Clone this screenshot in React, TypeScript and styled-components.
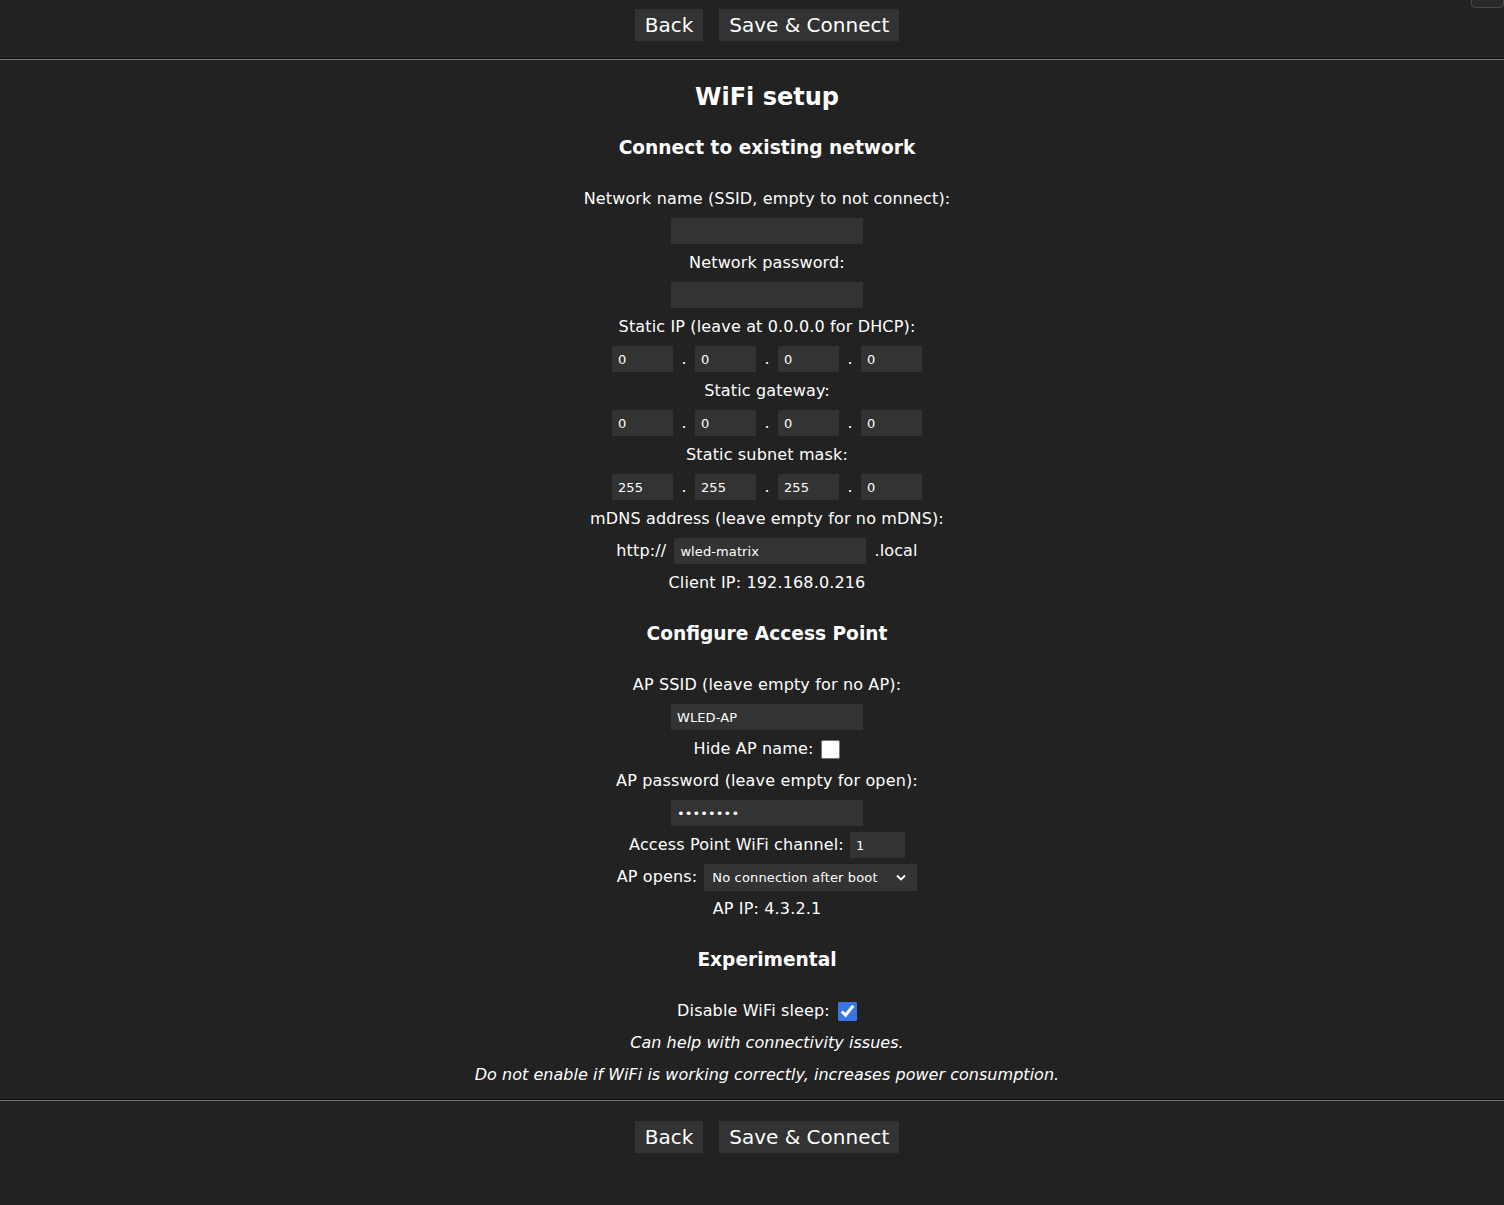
import { createGlobalStyle } from 'styled-components'
import styled from 'styled-components'

const GlobalStyle = createGlobalStyle`
  html, body {
    margin: 0;
    padding: 0;
    background: #222;
  }
  body {
    font-family: "DejaVu Sans", Verdana, sans-serif;
    font-size: 16px;
    color: #fff;
  }
`

const Page = styled.div`
  position: relative;
  min-height: 1205px;
  background: #222;
  overflow: hidden;
`

const HelpTab = styled.div`
  position: absolute;
  top: -28px;
  right: 0;
  width: 31px;
  height: 34px;
  background: #2a2a2a;
  border: 1px solid #4a4a4a;
  border-radius: 4px;
`

const ButtonRow = styled.div<{ $top: number }>`
  display: flex;
  justify-content: center;
  gap: 16px;
  padding-left: 30px;
  padding-top: ${(p) => p.$top}px;
  padding-bottom: 17px;
`

const Button = styled.button`
  height: 32px;
  padding: 0 10px;
  background: #333;
  color: #fff;
  border: 0;
  font-family: "DejaVu Sans", Verdana, sans-serif;
  font-size: 20px;
  line-height: 32px;
  cursor: pointer;
`

const Rule = styled.div`
  height: 1px;
  background: #0c0c0c;
  border-bottom: 1px solid #7a7a7a;
`

const Content = styled.div`
  padding-left: 30px;
  text-align: center;
  line-height: 32px;
  letter-spacing: 0.15px;
`

const Title = styled.h2`
  margin: 21px 0 19px;
  font-size: 24px;
  line-height: 32px;
  font-weight: bold;
  letter-spacing: 0;
`

const Section = styled.h3`
  margin: 19px 0;
  font-size: 18.6px;
  line-height: 32px;
  font-weight: bold;
  letter-spacing: 0;
`

const Line = styled.div`
  height: 32px;
  display: flex;
  justify-content: center;
  align-items: center;
  white-space: nowrap;
`

const Note = styled(Line)`
  font-style: italic;
  letter-spacing: 0.03px;
`

const Field = styled.input<{ $w: number }>`
  box-sizing: border-box;
  width: ${(p) => p.$w}px;
  height: 26px;
  margin: 0;
  padding: 0 6px;
  background: #333;
  color: #fff;
  border: 0;
  outline: none;
  font-family: "DejaVu Sans", Verdana, sans-serif;
  font-size: 13px;
  letter-spacing: 0.1px;
`

const Dot = styled.span`
  width: 22px;
  text-align: center;
`

const Gap = styled.span<{ $w: number }>`
  display: inline-block;
  width: ${(p) => p.$w}px;
`

const Check = styled.input`
  width: 19px;
  height: 19px;
  margin: 0 0 0 8px;
  accent-color: #3b74e6;
`

const SelectBox = styled.div`
  position: relative;
  display: inline-flex;
  margin-left: 7px;
`

const Select = styled.select`
  appearance: none;
  box-sizing: border-box;
  width: 213px;
  height: 27px;
  padding: 0 0 0 8px;
  background: #333;
  color: #fff;
  border: 0;
  outline: none;
  font-family: "DejaVu Sans", Verdana, sans-serif;
  font-size: 13px;
  letter-spacing: 0.15px;
`

const Chevron = styled.svg`
  position: absolute;
  right: 10px;
  top: 9px;
  pointer-events: none;
`

const IpRow = ({ values }: { values: string[] }) => (
  <Line>
    {values.map((v, i) => (
      <span key={i} style={{ display: 'contents' }}>
        {i > 0 && <Dot>.</Dot>}
        <Field $w={61} defaultValue={v} />
      </span>
    ))}
  </Line>
)

const Buttons = ({ top }: { top: number }) => (
  <ButtonRow $top={top}>
    <Button type="button">Back</Button>
    <Button type="submit">Save &amp; Connect</Button>
  </ButtonRow>
)

export default function App() {
  return (
    <Page>
      <GlobalStyle />
      <HelpTab />
      <Buttons top={9} />
      <Rule />
      <Content>
        <Title>WiFi setup</Title>
        <Section>Connect to existing network</Section>
        <Line>Network name (SSID, empty to not connect):</Line>
        <Line>
          <Field $w={192} />
        </Line>
        <Line>Network password:</Line>
        <Line>
          <Field $w={192} type="password" />
        </Line>
        <Line>Static IP (leave at 0.0.0.0 for DHCP):</Line>
        <IpRow values={['0', '0', '0', '0']} />
        <Line>Static gateway:</Line>
        <IpRow values={['0', '0', '0', '0']} />
        <Line>Static subnet mask:</Line>
        <IpRow values={['255', '255', '255', '0']} />
        <Line>mDNS address (leave empty for no mDNS):</Line>
        <Line>
          http://
          <Gap $w={8} />
          <Field $w={192} defaultValue="wled-matrix" />
          <Gap $w={8} />
          .local
        </Line>
        <Line>Client IP: 192.168.0.216</Line>

        <Section>Configure Access Point</Section>
        <Line>AP SSID (leave empty for no AP):</Line>
        <Line>
          <Field $w={192} defaultValue="WLED-AP" />
        </Line>
        <Line>
          Hide AP name:
          <Check type="checkbox" />
        </Line>
        <Line>AP password (leave empty for open):</Line>
        <Line>
          <Field $w={192} type="password" defaultValue="12345678" />
        </Line>
        <Line>
          Access Point WiFi channel:
          <Gap $w={6} />
          <Field $w={55} defaultValue="1" />
        </Line>
        <Line>
          AP opens:
          <SelectBox>
            <Select defaultValue="0">
              <option value="0">No connection after boot</option>
              <option value="1">Disconnected</option>
              <option value="2">Always</option>
              <option value="3">Never (not recommended)</option>
            </Select>
            <Chevron width="12" height="9" viewBox="0 0 12 9">
              <path d="M2 2.5 L6 6.5 L10 2.5" fill="none" stroke="#fff" strokeWidth="1.8" />
            </Chevron>
          </SelectBox>
        </Line>
        <Line>AP IP: 4.3.2.1</Line>

        <Section>Experimental</Section>
        <Line>
          Disable WiFi sleep:
          <Check type="checkbox" defaultChecked />
        </Line>
        <Note>Can help with connectivity issues.</Note>
        <Note>Do not enable if WiFi is working correctly, increases power consumption.</Note>
      </Content>
      <div style={{ height: 8 }} />
      <Rule />
      <Buttons top={20} />
    </Page>
  )
}
